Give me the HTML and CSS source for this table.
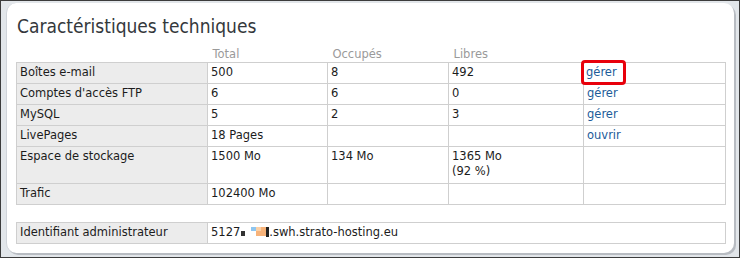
FILE: index.html
```html
<!DOCTYPE html>
<html lang="fr">
<head>
  <meta charset="UTF-8">
  <title>Caractéristiques techniques</title>
  <link rel="stylesheet" href="styles.css">
</head>
<body>
  <div class="frame">
    <div class="panel">
      <h2>Caractéristiques techniques</h2>

      <table class="specs">
        <tr class="head">
          <th></th>
          <th>Total</th>
          <th>Occupés</th>
          <th>Libres</th>
          <th></th>
        </tr>
        <tr>
          <td class="name">Boîtes e-mail</td>
          <td class="c-total">500</td>
          <td class="c-used">8</td>
          <td class="c-free">492</td>
          <td><a href="#" class="marked">gérer</a></td>
        </tr>
        <tr>
          <td class="name">Comptes d'accès FTP</td>
          <td>6</td>
          <td>6</td>
          <td>0</td>
          <td><a href="#">gérer</a></td>
        </tr>
        <tr>
          <td class="name">MySQL</td>
          <td>5</td>
          <td>2</td>
          <td>3</td>
          <td><a href="#">gérer</a></td>
        </tr>
        <tr>
          <td class="name">LivePages</td>
          <td>18 Pages</td>
          <td></td>
          <td></td>
          <td><a href="#">ouvrir</a></td>
        </tr>
        <tr class="tall">
          <td class="name">Espace de stockage</td>
          <td>1500 Mo</td>
          <td>134 Mo</td>
          <td>1365 Mo<br>(92 %)</td>
          <td></td>
        </tr>
        <tr>
          <td class="name">Trafic</td>
          <td>102400 Mo</td>
          <td></td>
          <td></td>
          <td></td>
        </tr>
      </table>

      <table class="specs admin">
        <tr>
          <td class="name">Identifiant administrateur</td>
          <td class="value">5127<span class="mask"><i class="m1"></i><i class="m2"></i><i class="m3"></i><i class="m3b"></i><i class="m4"></i></span>.swh.strato-hosting.eu</td>
        </tr>
      </table>
    </div>
  </div>
</body>
</html>
```

FILE: styles.css
```css
html, body {
  margin: 0;
  padding: 0;
}

body {
  width: 740px;
  height: 258px;
  font-family: "DejaVu Sans", Verdana, sans-serif;
  font-size: 11.5px;
  color: #1c1c1c;
}

.frame {
  box-sizing: border-box;
  width: 740px;
  height: 258px;
  border: 1px solid #3c3c3c;
  background: #e2e6ea;
  padding: 2px 5px 4px 5px;
}

.panel {
  box-sizing: border-box;
  height: 100%;
  background: #fff;
  border-radius: 10px;
  border-left: 1px solid #d0d4da;
  box-shadow: 2px 2px 0 #b8bcc2;
  padding: 12px 9px 0 9px;
}

h2 {
  margin: 0 0 10px 1px;
  font-family: "DejaVu Sans Condensed", "DejaVu Sans", sans-serif;
  font-size: 19px;
  font-weight: normal;
  color: #34383c;
}

.specs {
  border-collapse: collapse;
  width: 710px;
}

.specs th {
  text-align: left;
  font-weight: normal;
  color: #9a9a9a;
  padding: 0 4px 1px 5px;
  height: 14px;
}

.specs td {
  border: 1px solid #cfcfcf;
  padding: 2px 4px 3px 3px;
  height: 15px;
  vertical-align: top;
  line-height: 15px;
}

.specs td.name {
  background: #ececec;
  width: 183px;
}

/* column widths come from the first data row */
.specs td.c-total { width: 112px; }
.specs td.c-used { width: 113px; }
.specs td.c-free { width: 127px; }

.specs tr.tall td {
  height: 31px;
}

.specs a {
  color: #1d5c99;
  text-decoration: none;
}

.specs a.marked {
  display: inline-block;
  margin: -5px 0 -6px -6px;
  padding: 2px 6px 2px 2px;
  border: 3px solid #e8000b;
  border-radius: 4px;
}

.admin {
  margin-top: 17px;
}

.admin td.value {
  width: 510px;
}

/* blurred-out part of the login */
.mask {
  display: inline-block;
  width: 28px;
  height: 10px;
  position: relative;
  vertical-align: -1px;
  margin-left: 1px;
}

.mask i {
  position: absolute;
  display: block;
}

.mask .m1 { left: 0; top: 4px; width: 4px; height: 5px; background: #333; }
.mask .m2 { left: 10px; top: 0; width: 5px; height: 4px; background: #8ec6f0; }
.mask .m3 { left: 15px; top: 0; width: 10px; height: 9px; background: #f7b37a; }
.mask .m3b { left: 15px; top: 0; width: 5px; height: 4px; background: #fbd0a6; }
.mask .m4 { left: 25px; top: 0; width: 3px; height: 10px; background: #222; }
```
